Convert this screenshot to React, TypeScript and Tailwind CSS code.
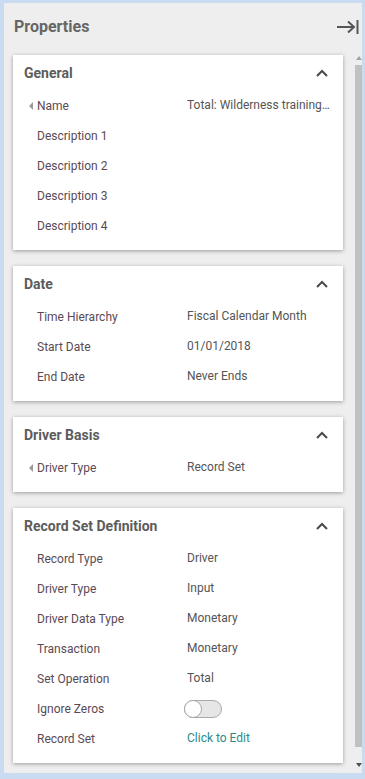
import React from "react";

type Row = { label: string; value?: string; caret?: boolean; kind?: "toggle" | "link" };

const sections: { title: string; rows: Row[] }[] = [
  {
    title: "General",
    rows: [
      { label: "Name", value: "Total: Wilderness training for new hires", caret: true },
      { label: "Description 1" },
      { label: "Description 2" },
      { label: "Description 3" },
      { label: "Description 4" },
    ],
  },
  {
    title: "Date",
    rows: [
      { label: "Time Hierarchy", value: "Fiscal Calendar Month" },
      { label: "Start Date", value: "01/01/2018" },
      { label: "End Date", value: "Never Ends" },
    ],
  },
  {
    title: "Driver Basis",
    rows: [{ label: "Driver Type", value: "Record Set", caret: true }],
  },
  {
    title: "Record Set Definition",
    rows: [
      { label: "Record Type", value: "Driver" },
      { label: "Driver Type", value: "Input" },
      { label: "Driver Data Type", value: "Monetary" },
      { label: "Transaction", value: "Monetary" },
      { label: "Set Operation", value: "Total" },
      { label: "Ignore Zeros", kind: "toggle" },
      { label: "Record Set", value: "Click to Edit", kind: "link" },
    ],
  },
];

function ChevronUp() {
  return (
    <svg width="12" height="8" viewBox="0 0 12 8" className="text-[#4a4a4a]">
      <polyline points="1,7 6,2 11,7" fill="none" stroke="currentColor" strokeWidth="2" />
    </svg>
  );
}

function Toggle() {
  return (
    <div className="-ml-[3px] flex h-[18px] w-[38px] items-center rounded-full border border-[#a9a9a9] bg-[#e6e6e6]">
      <div className="-ml-px h-[18px] w-[18px] rounded-full border border-[#a9a9a9] bg-white" />
    </div>
  );
}

function Card({ title, rows }: { title: string; rows: Row[] }) {
  return (
    <div className="bg-white pb-[9px] shadow-[0_1px_4px_rgba(0,0,0,0.35)]">
      <div className="flex h-9 items-center justify-between pl-[11px] pr-[15px]">
        <span className="text-[14px] font-bold text-[#5c5c5c]">{title}</span>
        <ChevronUp />
      </div>
      {rows.map((r) => (
        <div key={r.label + title} className="flex h-[30px] items-center text-[12px] text-[#555]">
          <div className="flex w-[174px] shrink-0 items-center pl-[16px]">
            <span className="flex w-2 justify-start">
              {r.caret && (
                <span className="h-0 w-0 border-y-[4.5px] border-r-[4px] border-y-transparent border-r-[#9a9a9a]" />
              )}
            </span>
            <span className="text-[#5a4a55]">{r.label}</span>
          </div>
          <div className="min-w-0 flex-1 pr-[12px]">
            {r.kind === "toggle" ? (
              <Toggle />
            ) : (
              <div className={"-mt-[2px] truncate " + (r.kind === "link" ? "text-[#2b8a8a]" : "text-[#555]")}>
                {r.value}
              </div>
            )}
          </div>
        </div>
      ))}
    </div>
  );
}

export default function App() {
  return (
    <div
      className="h-[779px] w-[365px] overflow-hidden bg-[#c9dbf1] pb-[6px] pl-[4px] pr-[3px] pt-[3px]"
      style={{ fontFamily: "Roboto, 'Liberation Sans', sans-serif" }}
    >
      <div className="flex h-full flex-col bg-[#eeeeee]">
        <div className="flex h-[46px] shrink-0 items-center justify-between pl-[10px] pr-[3px] pt-[2px]">
          <span className="text-[16px] font-bold text-[#666]">Properties</span>
          <svg width="23" height="14" viewBox="0 0 23 14" className="text-[#555]">
            <line x1="1" y1="7" x2="18" y2="7" stroke="currentColor" strokeWidth="2" />
            <polyline points="12,1.5 18,7 12,12.5" fill="none" stroke="currentColor" strokeWidth="2" />
            <line x1="21.5" y1="0" x2="21.5" y2="14" stroke="currentColor" strokeWidth="2" />
          </svg>
        </div>
        <div className="flex min-h-0 flex-1">
          <div className="flex w-[351px] flex-col gap-4 pl-[9px] pr-[12px] pt-[6px]">
            {sections.map((s) => (
              <Card key={s.title} title={s.title} rows={s.rows} />
            ))}
          </div>
          <div className="flex w-[7px] flex-col items-center pt-[4px]">
            <div className="mt-[3px] h-0 w-0 border-x-[3px] border-b-[4px] border-x-transparent border-b-[#a3a3a3]" />
            <div className="mt-[5px] h-[682px] w-[7px] bg-[#c1c1c1]" />
            <div className="flex-1" />
            <div className="mb-[6px] h-0 w-0 border-x-[3px] border-t-[4px] border-x-transparent border-t-[#505050]" />
          </div>
        </div>
      </div>
    </div>
  );
}
